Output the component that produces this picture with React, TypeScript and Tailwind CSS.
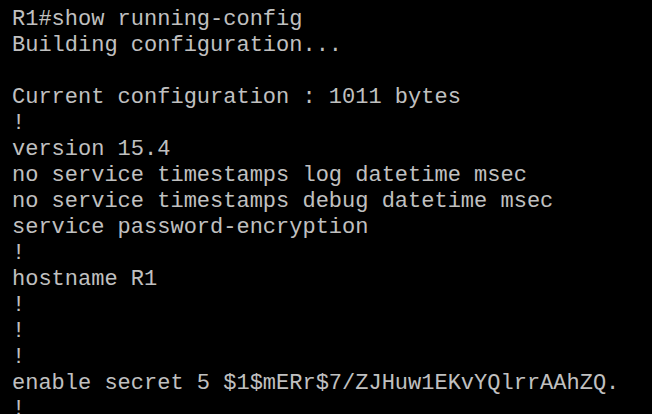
const lines = [
  'R1#show running-config',
  'Building configuration...',
  '',
  'Current configuration : 1011 bytes',
  '!',
  'version 15.4',
  'no service timestamps log datetime msec',
  'no service timestamps debug datetime msec',
  'service password-encryption',
  '!',
  'hostname R1',
  '!',
  '!',
  '!',
  'enable secret 5 $1$mERr$7/ZJHuw1EKvYQlrrAAhZQ.',
  '!',
];

export default function App() {
  return (
    <div className="w-[652px] h-[414px] overflow-hidden bg-black pl-[12px] pt-[7px]">
      <pre className="font-['Liberation_Mono','Courier_New',monospace] text-[22px] leading-[26px] text-[#c0c0c0] whitespace-pre">
        {lines.map((line, i) => (
          <div key={i} className="h-[26px]">
            {line}
          </div>
        ))}
      </pre>
    </div>
  );
}
